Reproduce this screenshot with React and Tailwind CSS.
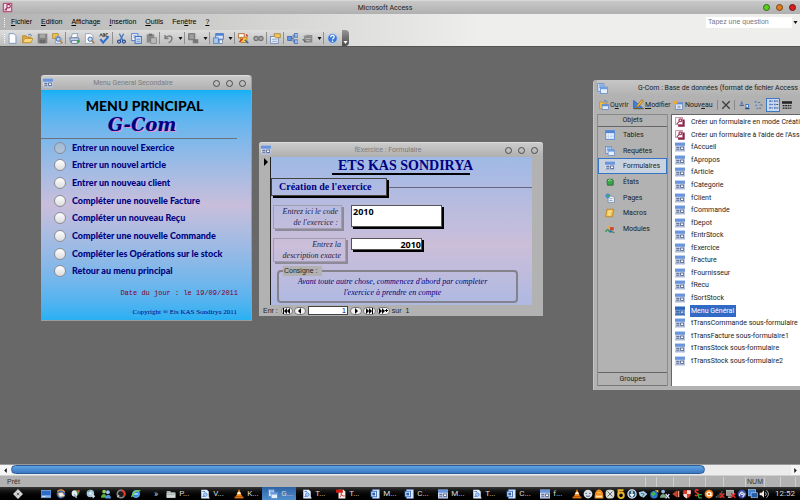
import clsx from 'clsx';

const ICONS = {
  access: (
    <>
      <rect x="1" y="1" width="14" height="14" rx="1" fill="#b85a80" />
      <rect x="3" y="3" width="10" height="10" fill="#f6e3ea" />
      <circle cx="9.5" cy="6" r="2.6" fill="none" stroke="#a03060" strokeWidth="1.6" />
      <path d="M8 8l-4 4M5 10l2 2" stroke="#a03060" strokeWidth="1.6" />
    </>
  ),
  wizard: (
    <>
      <rect x="1" y="1" width="11" height="11" fill="#fff" stroke="#c08098" strokeWidth="1.4" />
      <circle cx="8.5" cy="5" r="2.2" fill="none" stroke="#a03a5c" strokeWidth="2" />
      <path d="M7 7l-4 4" stroke="#a03a5c" strokeWidth="2" />
      <path d="M14 4v10H5" fill="none" stroke="#8c2346" strokeWidth="3" />
    </>
  ),
  form: (
    <>
      <rect x="0" y="1" width="16" height="14" fill="#d3ddf0" />
      <rect x="0" y="1" width="16" height="5" fill="#6a94dc" />
      <rect x="0" y="13" width="16" height="2" fill="#a9b8d6" />
      <path d="M2 8.5h5M2 11.5h5" stroke="#4a5c88" strokeWidth="1.6" />
      <rect x="9" y="8" width="5" height="4" fill="#fff" stroke="#3a4c78" strokeWidth="1.2" />
    </>
  ),
  formSelected: (
    <>
      <rect x="0" y="1" width="16" height="14" fill="#7ea3d8" />
      <rect x="0" y="1" width="16" height="5" fill="#2f66bd" />
      <rect x="0" y="13" width="16" height="2" fill="#3c6cb4" />
      <path d="M2 8.5h5M2 11.5h5" stroke="#2c5698" strokeWidth="1.6" />
      <rect x="9" y="8" width="5" height="4" fill="#b4cdf0" stroke="#2c5698" />
    </>
  ),
  database: (
    <>
      <rect x="1" y="1" width="9" height="11" fill="#cfe0f8" stroke="#4f83cc" />
      <path d="M3 3h6M3 6h6" stroke="#4f83cc" strokeWidth="1.4" />
      <rect x="5" y="6" width="10" height="9" fill="#e7effb" stroke="#4f83cc" />
      <rect x="5" y="6" width="10" height="3" fill="#6d9de2" />
    </>
  ),
  page: (
    <path d="M3 1h7l3 3v11H3z" fill="#fff" stroke="#6a8fc0" strokeWidth="1.2" />
  ),
  folder: (
    <>
      <path d="M1 4h5l1 2h6v8H1z" fill="#e5a83a" stroke="#a97618" />
      <path d="M4 8h12l-3 6H1z" fill="#fbd77a" stroke="#b58426" />
      <path d="M9 3c2-2 4-1 5 1" fill="none" stroke="#3d68a8" strokeWidth="1.3" />
    </>
  ),
  open: (
    <>
      <path d="M1 3h5l1 2h5v9H1z" fill="#f2c252" stroke="#b58426" />
      <rect x="5" y="7" width="10" height="8" fill="#e3ebf8" stroke="#4a78bc" />
      <rect x="5" y="7" width="10" height="3" fill="#5c8fdc" />
      <path d="M8 2c2-2 4-1 5 2" fill="none" stroke="#3d68a8" strokeWidth="1.3" />
    </>
  ),
  save: (
    <>
      <rect x="1" y="1" width="14" height="14" fill="#828282" />
      <rect x="4" y="2" width="8" height="5" fill="#a9a9a9" />
      <rect x="4" y="10" width="8" height="5" fill="#6a6a6a" />
    </>
  ),
  search: (
    <>
      <rect x="1" y="1" width="8" height="7" fill="#f2c14e" stroke="#a87824" />
      <path d="M5 5h6l3 3v7H5z" fill="#e8f0fb" stroke="#6a8fc0" />
      <circle cx="9" cy="9" r="3" fill="#bcd8f8" stroke="#345e9c" strokeWidth="1.3" />
      <path d="M11 11l4 4" stroke="#c07a24" strokeWidth="2" />
    </>
  ),
  print: (
    <>
      <path d="M5 1h8l-2 6H3z" fill="#fff" stroke="#6d84ac" />
      <path d="M1 7h13l1 6H2z" fill="#c2cfe4" stroke="#4c6491" />
      <rect x="4" y="11" width="8" height="4" fill="#e8eef8" stroke="#4c6491" />
      <rect x="12" y="10" width="3" height="4" fill="#2fa83a" />
    </>
  ),
  preview: (
    <>
      <path d="M2 1h8l3 3v11H2z" fill="#fff" stroke="#7a90b4" />
      <circle cx="9" cy="9" r="3.2" fill="#c4def8" stroke="#4b6b98" strokeWidth="1.4" />
      <path d="M11 11l4 4" stroke="#b07830" strokeWidth="2" />
    </>
  ),
  spell: (
    <>
      <path d="M1 5l2-4 2 4M6 1v4h2V1zM13 1h-3v4h3" fill="none" stroke="#333" strokeWidth="1.2" />
      <path d="M2 9l4 5 8-9" fill="none" stroke="#2f6ad0" strokeWidth="2.8" />
    </>
  ),
  cut: (
    <>
      <path d="M5 1l5 10M11 1L6 11" stroke="#3f6fb8" strokeWidth="1.8" />
      <circle cx="4.5" cy="12.5" r="2.2" fill="none" stroke="#284f98" strokeWidth="1.8" />
      <circle cx="11.5" cy="12.5" r="2.2" fill="none" stroke="#284f98" strokeWidth="1.8" />
    </>
  ),
  copy: (
    <>
      <rect x="1" y="1" width="9" height="10" fill="#fff" stroke="#4a7fd0" strokeWidth="1.4" />
      <path d="M3 4h5M3 7h5" stroke="#4a7fd0" />
      <rect x="6" y="5" width="9" height="10" fill="#d7e6fb" stroke="#3468bc" strokeWidth="1.4" />
      <path d="M8 9h5M8 12h5" stroke="#3468bc" />
    </>
  ),
  paste: (
    <>
      <rect x="1" y="2" width="11" height="12" fill="#8a8a8a" />
      <rect x="4" y="1" width="5" height="3" fill="#6b6b6b" />
      <rect x="7" y="7" width="8" height="8" fill="#b9b9b9" stroke="#777" />
    </>
  ),
  undo: (
    <path d="M3 3v5h5M3 8c3-5 10-5 10 0 0 3-2 5-5 6" fill="none" stroke="#7f7f7f" strokeWidth="2.2" />
  ),
  link: (
    <>
      <rect x="1" y="1" width="9" height="9" fill="#8c8c8c" stroke="#666" />
      <path d="M3 4h5M3 7h5" stroke="#c8c8c8" />
      <rect x="7" y="9" width="8" height="6" fill="#777" />
    </>
  ),
  analyze: (
    <>
      <rect x="4" y="1" width="11" height="8" fill="#dce8fa" stroke="#3e71bf" strokeWidth="1.3" />
      <rect x="4" y="1" width="11" height="3" fill="#4d83d4" />
      <rect x="1" y="7" width="7" height="8" fill="#a6c6f2" stroke="#3e71bf" />
      <rect x="9" y="10" width="5" height="5" fill="#eef4fd" stroke="#5a6c94" />
    </>
  ),
  relations: (
    <>
      <rect x="1" y="1" width="8" height="6" fill="#fff" stroke="#b4601c" strokeWidth="1.3" />
      <rect x="4" y="6" width="9" height="8" fill="#f6c64a" stroke="#a06a14" />
      <path d="M2 13l5-5M12 2l2 3" stroke="#d03024" strokeWidth="2" />
      <path d="M10 10l5 5" stroke="#2f62b8" strokeWidth="2" />
    </>
  ),
  chain: (
    <>
      <circle cx="4.5" cy="8" r="3" fill="#aaa" stroke="#777" strokeWidth="2" />
      <circle cx="11.5" cy="8" r="3" fill="#aaa" stroke="#777" strokeWidth="2" />
    </>
  ),
  properties: (
    <>
      <rect x="1" y="5" width="11" height="10" fill="#eef3fb" stroke="#5f7fb2" strokeWidth="1.2" />
      <path d="M3 9h7M3 12h7" stroke="#5f7fb2" />
      <path d="M6 1h9v6H9L6 5z" fill="#f2c65c" stroke="#9a7424" />
    </>
  ),
  tree: (
    <>
      <path d="M6 8h3M9 3v10M9 3h2M9 13h2" stroke="#3d5f96" />
      <rect x="1" y="5" width="6" height="6" fill="#5f95e4" stroke="#2f5ca8" />
      <rect x="11" y="1" width="5" height="5" fill="#9cc0f2" stroke="#2f5ca8" />
      <rect x="11" y="10" width="5" height="5" fill="#9cc0f2" stroke="#2f5ca8" />
    </>
  ),
  newObject: (
    <>
      <rect x="3" y="3" width="12" height="11" fill="#8b8b8b" />
      <path d="M1 5l8-3M5 8h8M5 11h6" stroke="#b9b9b9" strokeWidth="1.4" />
      <path d="M1 9l5 4" stroke="#666" strokeWidth="2" />
    </>
  ),
  help: (
    <>
      <circle cx="8" cy="8" r="7" fill="#3b78d8" stroke="#bcd3f4" strokeWidth="1.4" />
      <path d="M5.5 6c0-4 5-3 5-.5C10.5 7.5 8 7.5 8 9.5M8 11v2" fill="none" stroke="#fff" strokeWidth="1.8" />
    </>
  ),
  edit: (
    <>
      <path d="M1 2v12h14z" fill="#3d83e4" stroke="#1c4fa4" />
      <path d="M6 9l7-8 2 2-7 8-3 1z" fill="#f5b93c" stroke="#94600c" />
      <path d="M1 14h14" stroke="#7a5a1c" strokeWidth="1.4" />
    </>
  ),
  create: (
    <>
      <rect x="4" y="4" width="11" height="11" fill="#e3ebf8" stroke="#5279b8" />
      <rect x="4" y="4" width="11" height="3" fill="#5c8fdc" />
      <path d="M7 10h5M7 12.5h5" stroke="#5a6c94" />
      <path d="M4 0v8M0 4h8M1 1l6 6M7 1L1 7" stroke="#f0a732" strokeWidth="1.6" />
    </>
  ),
  remove: <path d="M2 2l12 12M14 2L2 14" stroke="#3f3f3f" strokeWidth="2.2" />,
  largeIcons: (
    <>
      <path d="M2 7l2-4 2 4z" fill="#3e72c4" />
      <path d="M1 9h6M9 14h6" stroke="#27497e" strokeWidth="1.5" />
      <rect x="10" y="8" width="4" height="4" fill="#fff" stroke="#3e72c4" strokeWidth="1.4" />
    </>
  ),
  smallIcons: (
    <>
      <path d="M1 4l3-2M2 9l3-1M4 14l3-1" stroke="#4b84d8" strokeWidth="2" />
      <path d="M6 4h4M9 8h5M8 13h4" stroke="#5b6c88" strokeWidth="1.3" />
    </>
  ),
  list: (
    <>
      <path d="M2 3h2M2 8h2M2 13h2M9 3h2M9 8h2M9 13h2" stroke="#2f66c8" strokeWidth="2.4" />
      <path d="M5 3h2M5 8h2M5 13h2M12 3h3M12 8h3M12 13h3" stroke="#445" strokeWidth="1.3" />
    </>
  ),
  details: (
    <>
      <rect x="0" y="2" width="16" height="4" fill="#222" />
      <path d="M1 9h14M1 13h14" stroke="#222" strokeWidth="2" strokeDasharray="3 1" />
    </>
  ),
  table: (
    <>
      <rect x="1" y="1" width="14" height="14" fill="#eaf2ff" stroke="#5d8fda" strokeWidth="1.6" />
      <rect x="1" y="1" width="14" height="4" fill="#4f86da" />
      <path d="M5.5 5v9M10 5v9M1 10h13" stroke="#b3cbef" />
    </>
  ),
  report: (
    <>
      <path d="M3 3h9l2 3v8H3z" fill="#5a7c60" />
      <circle cx="8" cy="8" r="5" fill="#38a848" stroke="#256e34" />
      <path d="M5 6c2-2 4-2 5 0" fill="none" stroke="#c4efc8" strokeWidth="1.4" />
    </>
  ),
  webPage: (
    <>
      <path d="M5 5h7l3 3v7H5z" fill="#f4f7fc" stroke="#56749f" />
      <path d="M7 9h5M7 12h5" stroke="#56749f" />
      <circle cx="4.5" cy="4.5" r="3.8" fill="#3f8be0" />
      <path d="M2 4l3-2 2 3-3 2z" fill="#43ae52" />
    </>
  ),
  macro: (
    <>
      <path d="M3 2h11l-2 12H1z" fill="#f1bd3d" stroke="#a8771c" />
      <path d="M5 5h6M4 8h6M4 11h5" stroke="#fff4c8" strokeWidth="1.5" />
    </>
  ),
  module: (
    <>
      <path d="M3 7l4-6 2 5z" fill="#efae2c" />
      <rect x="8" y="5" width="6" height="5" fill="#d34530" />
      <path d="M1 13c2-6 5-5 6 0M8 11l7 3" stroke="#2e8f46" strokeWidth="2" fill="none" />
      <circle cx="9" cy="12" r="2" fill="#3567cc" />
    </>
  ),
  start: (
    <>
      <path d="M8 0l4 4-4 4-4-4zM8 8l4 4-4 4-4-4zM0 8l4-4 4 4-4 4zM8 8l4-4 4 4-4 4z" fill="#d4d4d4" />
      <path d="M6 6l4 4M10 6l-4 4" stroke="#555" strokeWidth="1.4" />
    </>
  ),
  desktop: (
    <>
      <rect x="0" y="2" width="16" height="12" fill="#2c6cc8" stroke="#a9c7ee" />
      <path d="M1 10h14v3H1z" fill="#86b4ec" />
      <path d="M2 12h5" stroke="#fff" />
    </>
  ),
  mail: (
    <>
      <circle cx="8" cy="8" r="7" fill="#2c68bc" />
      <path d="M3 7l7-2 4 6-8 2z" fill="#f4ece0" stroke="#c58c54" />
      <path d="M2 4c4-4 9-3 12 1" fill="none" stroke="#f09630" strokeWidth="2" />
    </>
  ),
  satellite: (
    <>
      <circle cx="6" cy="7" r="5" fill="#e6ecec" />
      <path d="M8 2l6 2-3 6z" fill="#37a23c" />
      <path d="M5 8l4 6" stroke="#9cb4c8" strokeWidth="2.5" />
      <circle cx="12" cy="3" r="2" fill="#d94836" />
    </>
  ),
  disc: (
    <>
      <circle cx="7" cy="7" r="6" fill="#a7c7e4" />
      <circle cx="7" cy="7" r="2" fill="#edf6ff" />
      <path d="M9 8l6 3-4 4z" fill="#dce5ea" />
      <path d="M3 4l3-2" stroke="#58a650" strokeWidth="2" />
    </>
  ),
  people: (
    <>
      <circle cx="5" cy="4" r="3" fill="#8fd05c" />
      <path d="M0 14c0-8 9-8 9 0z" fill="#58b43c" />
      <circle cx="11" cy="5" r="3" fill="#9ac8f2" />
      <path d="M7 15c0-8 9-8 9 0z" fill="#4f93dc" />
    </>
  ),
  ring: (
    <>
      <circle cx="8" cy="8" r="6" fill="#1c1c1c" stroke="#8a8a8a" strokeWidth="2.5" />
      <path d="M8 2a6 6 0 0 1 5 9" fill="none" stroke="#e43a24" strokeWidth="3" />
      <path d="M2 13l3-3" stroke="#ccc" strokeWidth="2" />
    </>
  ),
  ie: (
    <>
      <circle cx="8" cy="8" r="5.5" fill="#2a8ae0" stroke="#77c4f8" strokeWidth="1.5" />
      <path d="M5 8h6" stroke="#fff" strokeWidth="1.8" />
      <path d="M1 13C3 5 9 1 15 3" fill="none" stroke="#72d04c" strokeWidth="2" />
    </>
  ),
  explorer: (
    <>
      <path d="M1 3h6l1 2h7v9H1z" fill="#a8b4b0" />
      <path d="M1 7h14v7H1z" fill="#d5dcd8" />
      <path d="M2 9h12" stroke="#8a9a94" />
    </>
  ),
  document: (
    <>
      <path d="M2 1h9l3 3v11H2z" fill="#eaf2ff" />
      <path d="M4 4h4M4 12h3" stroke="#4c82d8" strokeWidth="1.6" />
      <circle cx="8.5" cy="9" r="3" fill="#a8cbf5" stroke="#5a8cd8" strokeWidth="1.4" />
      <path d="M11 11l4 4" stroke="#dde6f5" strokeWidth="2" />
    </>
  ),
  cone: (
    <>
      <path d="M8 0l5 12H3z" fill="#f08a1c" />
      <path d="M6 5h4l1 3H5z" fill="#fff" />
      <path d="M1 12h14v3H1z" fill="#e8740e" />
    </>
  ),
  pdf: (
    <>
      <path d="M4 1h8l3 3v11H4z" fill="#f3efec" />
      <rect x="0" y="1" width="11" height="5" fill="#cc1c16" />
      <path d="M6 13c4-3 3-7 2-6-1 2 3 5 6 4" fill="none" stroke="#cc1c16" strokeWidth="1.3" />
    </>
  ),
  word: (
    <>
      <path d="M4 1h11v14H4z" fill="#dce9fb" stroke="#6b95d8" />
      <rect x="1" y="3" width="10" height="10" fill="#2e62b8" />
      <rect x="3" y="5" width="6" height="6" fill="none" stroke="#fff" strokeWidth="1.3" />
    </>
  ),
  smile: (
    <>
      <circle cx="8" cy="8" r="7" fill="#d9dde8" />
      <path d="M4 7h2M10 7h2M5 11c2 1 4 1 6 0" fill="none" stroke="#3c486c" strokeWidth="1.5" />
    </>
  ),
  avast: (
    <>
      <path d="M1 12c0-15 14-15 14 0v3H1z" fill="#f28a1c" />
      <path d="M3 12h10" stroke="#ffe6a8" strokeWidth="3" />
      <path d="M5 6h6" stroke="#ffc45a" strokeWidth="2" />
    </>
  ),
  skype: (
    <>
      <rect x="1" y="1" width="14" height="14" rx="5" fill="#d8dcd8" />
      <path d="M4 4l8 8M12 4l-8 8" stroke="#6a6f6a" strokeWidth="1.6" />
    </>
  ),
  key: (
    <>
      <circle cx="8" cy="10" r="4.5" fill="none" stroke="#f0b42c" strokeWidth="3" />
      <path d="M4 9V2h8" fill="none" stroke="#f0b42c" strokeWidth="3" />
    </>
  ),
  download: (
    <>
      <circle cx="8" cy="8" r="6.5" fill="#21527c" stroke="#e3eef4" strokeWidth="2" />
      <path d="M8 3v8M5 8l3 4 3-4" fill="none" stroke="#fff" strokeWidth="2" />
    </>
  ),
  bird: (
    <>
      <path d="M1 5l8-2 6 5-6 6-6-3z" fill="#a9cfe4" />
      <path d="M5 7l5 1-3 4" fill="none" stroke="#446f8c" strokeWidth="1.5" />
    </>
  ),
  globe: (
    <>
      <circle cx="8" cy="9" r="6" fill="#2b75cc" />
      <path d="M3 8l4-4 4 3-4 5z" fill="#43b84a" />
      <path d="M9 2h6v4z" fill="#f4cb30" />
    </>
  ),
  offline: (
    <>
      <circle cx="5" cy="4" r="3" fill="#9cb9d8" />
      <path d="M0 14c0-8 10-8 10 0z" fill="#7aa880" />
      <path d="M9 8l6 7M15 8l-6 7" stroke="#d8e4f4" strokeWidth="2" />
    </>
  ),
  mute: (
    <>
      <path d="M2 8l8-6v12z" fill="#c4452c" />
      <path d="M12 3v10" stroke="#e89a80" strokeWidth="2.5" />
    </>
  ),
  shield: (
    <>
      <path d="M2 2h12v6c0 4-3 6-6 7-3-1-6-3-6-7z" fill="#d83a2c" />
      <path d="M8 2h6v6H8zM2 8h6v7c-3-1-6-3-6-7z" fill="#f3d7d2" />
    </>
  ),
  sync: (
    <>
      <path d="M9 2C3 0 2 5 6 6s3 6-3 4" fill="none" stroke="#e43428" strokeWidth="2.6" />
      <path d="M9 14V9h5M9 14h5" fill="none" stroke="#36a03c" strokeWidth="2" />
    </>
  ),
  avastBall: (
    <>
      <circle cx="8" cy="8" r="7" fill="#f08220" />
      <circle cx="8" cy="8" r="3" fill="none" stroke="#fff" strokeWidth="2" />
      <path d="M11 6v5h2" stroke="#fff" strokeWidth="1.5" fill="none" />
    </>
  ),
  signal: (
    <>
      <path d="M2 14v-3M5 14V9M8 14V6M11 14V3" stroke="#777" strokeWidth="1.6" />
      <path d="M8 7l7 7M15 7l-7 7" stroke="#dc2a24" strokeWidth="2.4" />
    </>
  ),
  network: (
    <>
      <rect x="1" y="2" width="11" height="8" fill="#9a9a9a" stroke="#ddd" />
      <path d="M3 13h6" stroke="#ddd" strokeWidth="2" />
      <path d="M8 7l7 7M15 7l-7 7" stroke="#dc2a24" strokeWidth="2.4" />
    </>
  ),
  swirl: (
    <>
      <circle cx="8" cy="8" r="7" fill="#3c4fa4" />
      <path d="M4 11c0-6 5-8 6-4 0 3-4 2-3 0M9 13l4-6" fill="none" stroke="#e4e9f8" strokeWidth="1.8" />
    </>
  ),
  monitor: (
    <>
      <rect x="0" y="1" width="12" height="10" fill="#3c83d4" stroke="#b8d2ee" />
      <rect x="5" y="6" width="10" height="8" fill="#225ea8" stroke="#b8d2ee" />
    </>
  ),
  volume: (
    <>
      <path d="M1 6h3l4-4v12l-4-4H1z" fill="#e8e8e8" />
      <path d="M10 5c2 2 2 4 0 6M12 2c4 4 4 8 0 12" fill="none" stroke="#d4d4d4" strokeWidth="1.3" />
    </>
  ),
};

function Icon({ name, className = 'size-[11px]' }) {
  return (
    <svg viewBox="0 0 16 16" className={clsx('shrink-0', className)} aria-hidden="true">
      {ICONS[name]}
    </svg>
  );
}

function Mnemonic({ text, at }) {
  return (
    <span>
      {text.slice(0, at)}
      <u>{text[at]}</u>
      {text.slice(at + 1)}
    </span>
  );
}

const MENUS = [
  ['Fichier', 0],
  ['Edition', 0],
  ['Affichage', 0],
  ['Insertion', 0],
  ['Outils', 0],
  ['Fenêtre', 3],
  ['?', 0],
];

// '|' draws a separator and 'v' a drop-down arrow
const TOOLS = [
  'page', 'folder', 'save', 'search', '|',
  'print', 'preview', 'spell', '|',
  'cut', 'copy', 'paste', '|',
  'undo', 'v', '|',
  'link', 'v', '|',
  'analyze', 'v', '|',
  'relations', 'chain', '|',
  'properties', '|',
  'tree', 'newObject', 'v', '|',
  'help',
];

const ACTIONS = [
  'Entrer un nouvel Exercice',
  'Entrer un nouvel article',
  'Entrer un nouveau client',
  'Compléter une nouvelle Facture',
  'Compléter un nouveau Reçu',
  'Compléter une nouvelle Commande',
  'Compléter les Opérations sur le stock',
  'Retour au menu principal',
];

const OBJECTS = [
  ['table', 'Tables'],
  ['database', 'Requêtes'],
  ['form', 'Formulaires'],
  ['report', 'États'],
  ['webPage', 'Pages'],
  ['macro', 'Macros'],
  ['module', 'Modules'],
];

const FORMS = [
  'Créer un formulaire en mode Créati',
  "Créer un formulaire à l'aide de l'Ass",
  'fAccueil',
  'fApropos',
  'fArticle',
  'fCategorie',
  'fClient',
  'fCommande',
  'fDepot',
  'fEntrStock',
  'fExercice',
  'fFacture',
  'fFournisseur',
  'fRecu',
  'fSortStock',
  'Menu Général',
  'tTransCommande sous-formulaire',
  'tTransFacture sous-formulaire1',
  'tTransStock sous-formulaire',
  'tTransStock sous-formulaire2',
];

const QUICK = ['desktop', 'mail', 'satellite', 'disc', 'people', 'ring', 'ie'];

const TASKS = [
  ['explorer', 'P...'],
  ['document', 'V...'],
  ['cone', 'K...'],
  ['database', 'G...'],
  ['document', 'T...'],
  ['pdf', 'T...'],
  ['word', 'M...'],
  ['word', 'C...'],
  ['form', 'M...'],
  ['document', 'T...'],
  ['word', 'C...'],
  ['form', 'f...'],
];

const TRAY = [
  'cone', 'smile', 'avast', 'skype', 'key', 'download', 'bird', 'globe', 'offline',
  'mute', 'shield', 'sync', 'avastBall', 'signal', 'network', 'swirl', 'monitor', 'volume',
];

function TitleBar() {
  return (
    <header className="flex h-[14px] shrink-0 items-center border-t border-[#d8d8d8] bg-linear-to-b from-[#c8c8c8] to-[#b0b0b0] px-[2px]">
      <Icon name="access" />
      <h1 className="flex-1 pr-[6px] text-center font-[Roboto] text-[7px] leading-[12px] text-[#222]">Microsoft Access</h1>
      <div className="flex gap-[6px] pr-[2px]">
        <button aria-label="Réduire" className="size-[7px] rounded-full border border-[#33691a] bg-[#58d020]" />
        <button aria-label="Agrandir" className="size-[7px] rounded-full border border-[#7c4310] bg-[#dd7d22]" />
        <button aria-label="Fermer" className="size-[7px] rounded-full border border-[#701414] bg-[#d81e1e]" />
      </div>
    </header>
  );
}

function Arrow({ light }) {
  return (
    <svg viewBox="0 0 4 3" className="h-[3px] w-[5px]" aria-hidden="true">
      <path d="M0 0h4L2 3z" fill={light ? '#fff' : '#111'} />
    </svg>
  );
}

function Bars() {
  return (
    <div className="shrink-0 bg-linear-to-r from-[#b4b4b4] via-[#eeeeec] via-60% to-[#eeeeec]">
      <div className="flex h-4 items-center justify-between">
        <nav className="flex items-center gap-[9px] pl-1 text-[7px] leading-[10px] text-black">
          <span className="-mr-[3px] h-[9px] border-l border-dotted border-white" />
          {MENUS.map(([text, at]) => (
            <button key={text}>
              <Mnemonic text={text} at={at} />
            </button>
          ))}
        </nav>
        <div className="mr-[1px] flex h-[11px] w-[93px] items-center bg-white">
          <input
            aria-label="Tapez une question"
            placeholder="Tapez une question"
            className="min-w-0 flex-1 pl-[2px] text-[7px] leading-[10px] placeholder:text-[#77777f]"
          />
          <button aria-label="Questions" className="grid h-full w-[7px] place-items-center bg-[#eeeeec]">
            <Arrow />
          </button>
        </div>
      </div>
      <div className="flex h-4 w-fit items-center rounded-r-sm bg-linear-to-b from-[#dedede] to-[#bcbcbc] pl-1">
        <span className="h-[9px] w-[1px] border-l border-dotted border-white" />
        {TOOLS.map((tool, i) => {
          if (tool === '|') return <span key={i} className="mr-[1px] h-[12px] w-[1px] bg-[#8f8f8f]" />;
          if (tool === 'v') {
            return (
              <button key={i} aria-label="Plus" className="grid h-full w-2 place-items-center">
                <Arrow />
              </button>
            );
          }
          return (
            <button key={i} aria-label={tool} className="grid h-full w-[15px] place-items-center">
              <Icon name={tool} />
            </button>
          );
        })}
        <button aria-label="Options" className="ml-[2px] grid h-4 w-[7px] place-items-end justify-center rounded-r-sm bg-linear-to-b from-[#969696] to-[#4c4c4c] pb-[2px]">
          <Arrow light />
        </button>
      </div>
    </div>
  );
}

function ChildTitle({ text }) {
  return (
    <div className="flex h-[15px] items-center rounded-t-[3px] border-t border-[#dcdcdc] bg-linear-to-b from-[#cbcbcb] to-[#b0b0b0] px-[2px]">
      <Icon name="form" className="size-[10px]" />
      <h2 className="flex-1 text-center font-[Roboto] text-[7px] leading-[10px] text-[#7c7c7c]">{text}</h2>
      <div className="flex gap-[6px] pr-[3px]">
        <button aria-label="Réduire" className="size-[7px] rounded-full border border-[#4c4c4c]" />
        <button aria-label="Agrandir" className="size-[7px] rounded-full border border-[#4c4c4c]" />
        <button aria-label="Fermer" className="size-[7px] rounded-full border border-[#4c4c4c]" />
      </div>
    </div>
  );
}

function MainMenuWindow() {
  return (
    <section className="absolute top-[28px] left-[41px] w-[211px] rounded-t-[3px] border-r border-b border-[#9c9c9c]">
      <ChildTitle text="Menu General Secondaire" />
      <div className="bg-linear-to-b from-[#12b0f5] via-[#c8bedb] via-50% to-[#26b0f3] pt-[6px] pb-[3px]">
        <h3 className="pr-[3px] text-center font-[Lato] text-[14px] leading-[19px] font-black text-black">MENU PRINCIPAL</h3>
        <p className="pr-[8px] text-center font-['DejaVu_Serif'] text-[18px] leading-[20px] font-bold text-[#000080] italic [text-shadow:1px_1px_#f08cc8]">
          G-Com
        </p>
        <hr className="mt-[3px] mr-[14px] border-[#66737f]" />
        <ul className="grid h-[141px] auto-rows-fr pl-[13px]">
          {ACTIONS.map((action, i) => (
            <li key={action} className="flex items-center">
              <button className="flex items-center gap-[6px] font-[Lato] text-[9px] leading-[12px] font-black text-[#000080]">
                <span
                  className={clsx(
                    'size-[12px] rounded-full border border-[#8c8c94]',
                    i === 0 ? 'bg-linear-to-b from-[#9dbad8] to-[#b4c4d8]' : 'bg-linear-to-b from-white to-[#dcdce0]'
                  )}
                />
                {action}
              </button>
            </li>
          ))}
        </ul>
        <p className="mt-[8px] pr-[13px] text-right font-['Liberation_Mono'] text-[7px] leading-[10px] text-[#800020]">
          Date du jour : le 19/09/2011
        </p>
        <p className="mt-[9px] pr-[14px] text-right font-['Liberation_Serif'] text-[7px] leading-[10px] text-[#000080]">
          Copyright ® Ets KAS Sondirya 2011
        </p>
      </div>
    </section>
  );
}

function NavButton({ label, d, wide }) {
  return (
    <button
      aria-label={label}
      className={clsx('grid h-[8px] place-items-center rounded-full border border-[#777] bg-[#f2f2f2]', wide ? 'w-[13px]' : 'w-[12px]')}
    >
      <svg viewBox="0 0 10 6" className="h-[6px] w-[10px]" aria-hidden="true">
        <path d={d} fill="#000" />
      </svg>
    </button>
  );
}

function ExerciseWindow() {
  return (
    <section className="absolute top-[95px] left-[259px] w-[284px] rounded-t-[3px] bg-[#b2b2b2]">
      <ChildTitle text="fExercice : Formulaire" />
      <div className="flex pr-[11px]">
        <div className="w-[12px] shrink-0 border-r border-[#222] pt-[1px] pl-[5px]">
          <svg viewBox="0 0 4 8" className="h-[8px] w-[4px]" aria-hidden="true">
            <path d="M0 0l4 4-4 4z" fill="#000" />
          </svg>
        </div>
        <div className="min-w-0 flex-1 bg-linear-to-b from-[#9fb9e6] via-[#cbbed9] via-60% to-[#aeb9e2] pb-[2px]">
          <h3 className="ml-[61px] w-[138px] border-b-2 border-black pt-[1px] pl-[6px] font-['Liberation_Serif'] text-[14px] leading-[15px] font-bold whitespace-nowrap text-[#000080]">
            ETS KAS SONDIRYA
          </h3>
          <div className="mt-[3px] flex items-center">
            <h4 className="mr-[2px] h-[18px] w-[116px] border border-[#444] pl-[7px] font-['Liberation_Serif'] text-[10px] leading-[15px] font-bold whitespace-nowrap text-[#000080] shadow-[2px_2px_#000]">
              Création de l'exercice
            </h4>
            <hr className="flex-1 border-[#66667c]" />
          </div>
          <div className="mt-[9px] flex items-start gap-[9px] pl-[2px] font-['Liberation_Serif'] text-[8px] leading-[11px] text-[#222244]">
            <label htmlFor="code" className="w-[69px] border border-[#a49cb0] pr-[3px] text-right italic shadow-[2px_2px_#8e8a98]">
              Entrez ici le code
              <br />
              de l'exercice :
            </label>
            <input
              id="code"
              defaultValue="2010"
              className="h-[22px] w-[91px] border border-[#555] bg-white pb-[9px] pl-[1px] font-['Open_Sans'] text-[9px] leading-[10px] font-bold text-black shadow-[2px_2px_#000]"
            />
          </div>
          <div className="mt-[9px] flex items-start gap-[5px] pl-[2px] font-['Liberation_Serif'] text-[8px] leading-[11px] text-[#222244]">
            <label htmlFor="description" className="w-[73px] border border-[#a49cb0] pr-[4px] text-right italic shadow-[2px_2px_#8e8a98]">
              Entrez la
              <br />
              description exacte
            </label>
            <input
              id="description"
              defaultValue="2010"
              className="h-[12px] w-[71px] border border-[#555] bg-white text-right font-['Open_Sans'] text-[9px] leading-[10px] font-bold text-black shadow-[2px_2px_#000]"
            />
          </div>
          <fieldset className="mt-[4px] mr-[14px] ml-[6px] rounded-[4px] border-2 border-[#84828c] pr-[14px] pb-[3px] pl-[4px]">
            <legend className="bg-[#b2b2b2] px-[1px] pr-[5px] text-[7px] leading-[10px] text-[#222]">Consigne :</legend>
            <p className="text-center font-['Liberation_Serif'] text-[8px] leading-[11px] whitespace-nowrap text-[#000080] italic">
              Avant toute autre chose, commencez d'abord par completer
              <br />
              l'exercice à prendre en compte
            </p>
          </fieldset>
        </div>
      </div>
      <div className="flex h-[11px] items-center gap-[1px] pl-[4px] text-[7px] leading-[10px] text-[#222]">
        <span className="mr-[2px]">Enr :</span>
        <NavButton label="Premier" d="M1 0h1v6H1zM5 0v6L2 3zM8 0v6L5 3z" />
        <NavButton label="Précédent" d="M6 0v6L3 3z" />
        <input
          aria-label="Enregistrement"
          defaultValue="1"
          className="mx-[1px] h-[9px] w-[40px] border border-[#444] bg-white px-[1px] text-right text-[7px] leading-[8px] text-[#000080]"
        />
        <NavButton label="Suivant" d="M4 0l3 3-3 3z" />
        <NavButton label="Dernier" d="M2 0l3 3-3 3zM5 0l3 3-3 3zM8 0h1v6H8z" wide />
        <NavButton label="Nouveau" d="M1 0l3 3-3 3zM4 0l3 3-3 3zM7 2h3v1H7zM8 1h1v3H8z" wide />
        <span className="ml-[1px]">sur</span>
        <span className="ml-[3px]">1</span>
      </div>
    </section>
  );
}

function DatabaseWindow() {
  return (
    <section className="absolute top-[33px] right-0 left-[593px] rounded-tl-[3px] border-l border-[#c4c4c4] bg-[#b2b2b2] pb-[4px] pl-[3px] font-[Roboto] text-[7px] leading-[10px] text-[#1c1c1c]">
      <div className="flex h-[16px] items-center gap-[30px] bg-linear-to-b from-[#c6c6c6] to-[#b2b2b2]">
        <Icon name="database" className="size-[11px]" />
        <h2 className="whitespace-nowrap">G-Com : Base de données (format de fichier Access</h2>
      </div>
      <div className="flex h-[17px] items-center">
        <button className="flex w-[36px] items-center gap-[1px] pl-[2px]">
          <Icon name="open" className="size-[10px]" />
          <Mnemonic text="Ouvrir" at={1} />
        </button>
        <button className="flex w-[40px] items-center gap-[1px]">
          <Icon name="edit" />
          <Mnemonic text="Modifier" at={0} />
        </button>
        <button className="flex w-[44px] items-center gap-[2px]">
          <Icon name="create" className="size-[10px]" />
          <Mnemonic text="Nouveau" at={4} />
        </button>
        <button aria-label="Supprimer" className="grid w-[18px] place-items-center border-x border-[#888]">
          <Icon name="remove" className="size-[10px]" />
        </button>
        <button aria-label="Grandes icônes" className="ml-[2px] grid w-[15px] place-items-center">
          <Icon name="largeIcons" />
        </button>
        <button aria-label="Petites icônes" className="grid w-[14px] place-items-center">
          <Icon name="smallIcons" className="size-[10px]" />
        </button>
        <button aria-label="Liste" className="grid size-[14px] place-items-center border border-[#3e78c0] bg-[#c8d8ee]">
          <Icon name="list" />
        </button>
        <button aria-label="Détails" className="grid w-[14px] place-items-center">
          <Icon name="details" className="size-[10px]" />
        </button>
      </div>
      <div className="mt-[1px] flex gap-[3px]">
        <div className="flex w-[71px] shrink-0 flex-col border-r border-l border-[#8c8c8c]">
          <h3 className="border-t border-b border-t-[#888] border-b-[#666] text-center leading-[11px]">Objets</h3>
          <ul className="grid h-[110px] auto-rows-fr">
            {OBJECTS.map(([icon, name]) => (
              <li key={name} className="grid">
                <button
                  className={clsx(
                    'flex items-center gap-[8px] border pl-[6px]',
                    name === 'Formulaires' ? 'border-[#3874c4] bg-[#c9d2df]' : 'border-transparent'
                  )}
                >
                  <Icon name={icon} className="size-[10px]" />
                  {name}
                </button>
              </li>
            ))}
          </ul>
          <h3 className="mt-auto border-t border-b border-t-[#666] border-b-[#777] text-center leading-[12px]">Groupes</h3>
        </div>
        <ul className="grid h-[272px] min-w-0 flex-1 auto-rows-fr border-t border-l border-[#666] bg-white pt-[1px] pb-[19px] pl-[3px]">
          {FORMS.map((form, i) => (
            <li key={form} className="flex items-center">
              <button className="flex items-center gap-[5px] whitespace-nowrap">
                <Icon name={i < 2 ? 'wizard' : form === 'Menu Général' ? 'formSelected' : 'form'} className="size-[10px]" />
                <span className={clsx('pl-[1px]', form === 'Menu Général' && 'bg-[#316ac5] py-[1px] pr-[2px] text-white')}>{form}</span>
              </button>
            </li>
          ))}
        </ul>
      </div>
    </section>
  );
}

function ScrollBar() {
  return (
    <div className="flex h-[11px] shrink-0 items-center border-t border-[#999] bg-[#ececec]">
      <button aria-label="Gauche" className="grid h-full w-[11px] place-items-center bg-[#f6f6f6]">
        <svg viewBox="0 0 3 6" className="h-[5px] w-[3px]" aria-hidden="true">
          <path d="M3 0v6L0 3z" fill="#111" />
        </svg>
      </button>
      <div className="h-full flex-1">
        <div className="h-[9px] w-[89%] rounded-full border border-[#2a5c98] bg-linear-to-b from-[#5fa4e0] to-[#3b79c4]" />
      </div>
      <button aria-label="Droite" className="grid h-full w-[9px] place-items-center bg-[#f6f6f6]">
        <svg viewBox="0 0 3 6" className="h-[5px] w-[3px]" aria-hidden="true">
          <path d="M0 0v6l3-3z" fill="#111" />
        </svg>
      </button>
    </div>
  );
}

function StatusBar() {
  return (
    <div className="flex h-[12px] shrink-0 items-center border-t border-[#d0d0d0] bg-[#b2b2b2] text-[7px] leading-[10px] text-[#333]">
      <span className="flex-1 pl-[7px]">Prêt</span>
      <div className="mr-1 flex h-[10px] border-l border-[#cfcfcf] *:border-r *:border-[#cfcfcf]">
        <span className="w-[11px]" />
        <span className="w-[17px]" />
        <span className="w-[16px]" />
        <span className="w-[16px]" />
        <span className="w-[18px]" />
        <span className="w-[22px]" />
        <span className="w-[19px] text-center">NUM</span>
        <span className="w-[16px]" />
        <span className="w-[15px]" />
      </div>
    </div>
  );
}

function TaskBar() {
  return (
    <footer className="flex h-[13px] shrink-0 items-center bg-linear-to-b from-[#3a3a3a] via-[#141414] via-30% to-black font-[Roboto] text-[8px] leading-[10px] text-[#d8d8d8]">
      <button aria-label="Démarrer" className="mr-[18px] ml-[13px]">
        <Icon name="start" className="size-[10px]" />
      </button>
      <div className="flex gap-[5px]">
        {QUICK.map((name) => (
          <button key={name} aria-label={name}>
            <Icon name={name} className="size-[10px]" />
          </button>
        ))}
      </div>
      <button aria-label="Autres" className="mr-[2px] ml-[13px] text-[9px]">»</button>
      <div className="flex h-full">
        {TASKS.map(([icon, label], i) => (
          <button
            key={i}
            className={clsx('flex h-full w-[34px] items-center gap-[3px] pl-[6px]', icon === 'database' && 'bg-linear-to-b from-[#2c62a4] to-[#5090cc]')}
          >
            <Icon name={icon} className="size-[10px]" />
            {label}
          </button>
        ))}
      </div>
      <div className="ml-auto flex items-center gap-[1px]">
        {TRAY.map((name, i) => (
          <Icon key={i} name={name} className="size-[10px]" />
        ))}
        <time className="pr-[5px] pl-[5px]">12:52</time>
      </div>
    </footer>
  );
}

export default function App() {
  return (
    <div className="flex h-screen flex-col overflow-hidden bg-[#686868] font-['Liberation_Sans',sans-serif]">
      <TitleBar />
      <Bars />
      <main className="relative flex-1 overflow-hidden border-t border-[#555] bg-[#686868]">
        <MainMenuWindow />
        <ExerciseWindow />
        <DatabaseWindow />
      </main>
      <ScrollBar />
      <StatusBar />
      <TaskBar />
    </div>
  );
}
